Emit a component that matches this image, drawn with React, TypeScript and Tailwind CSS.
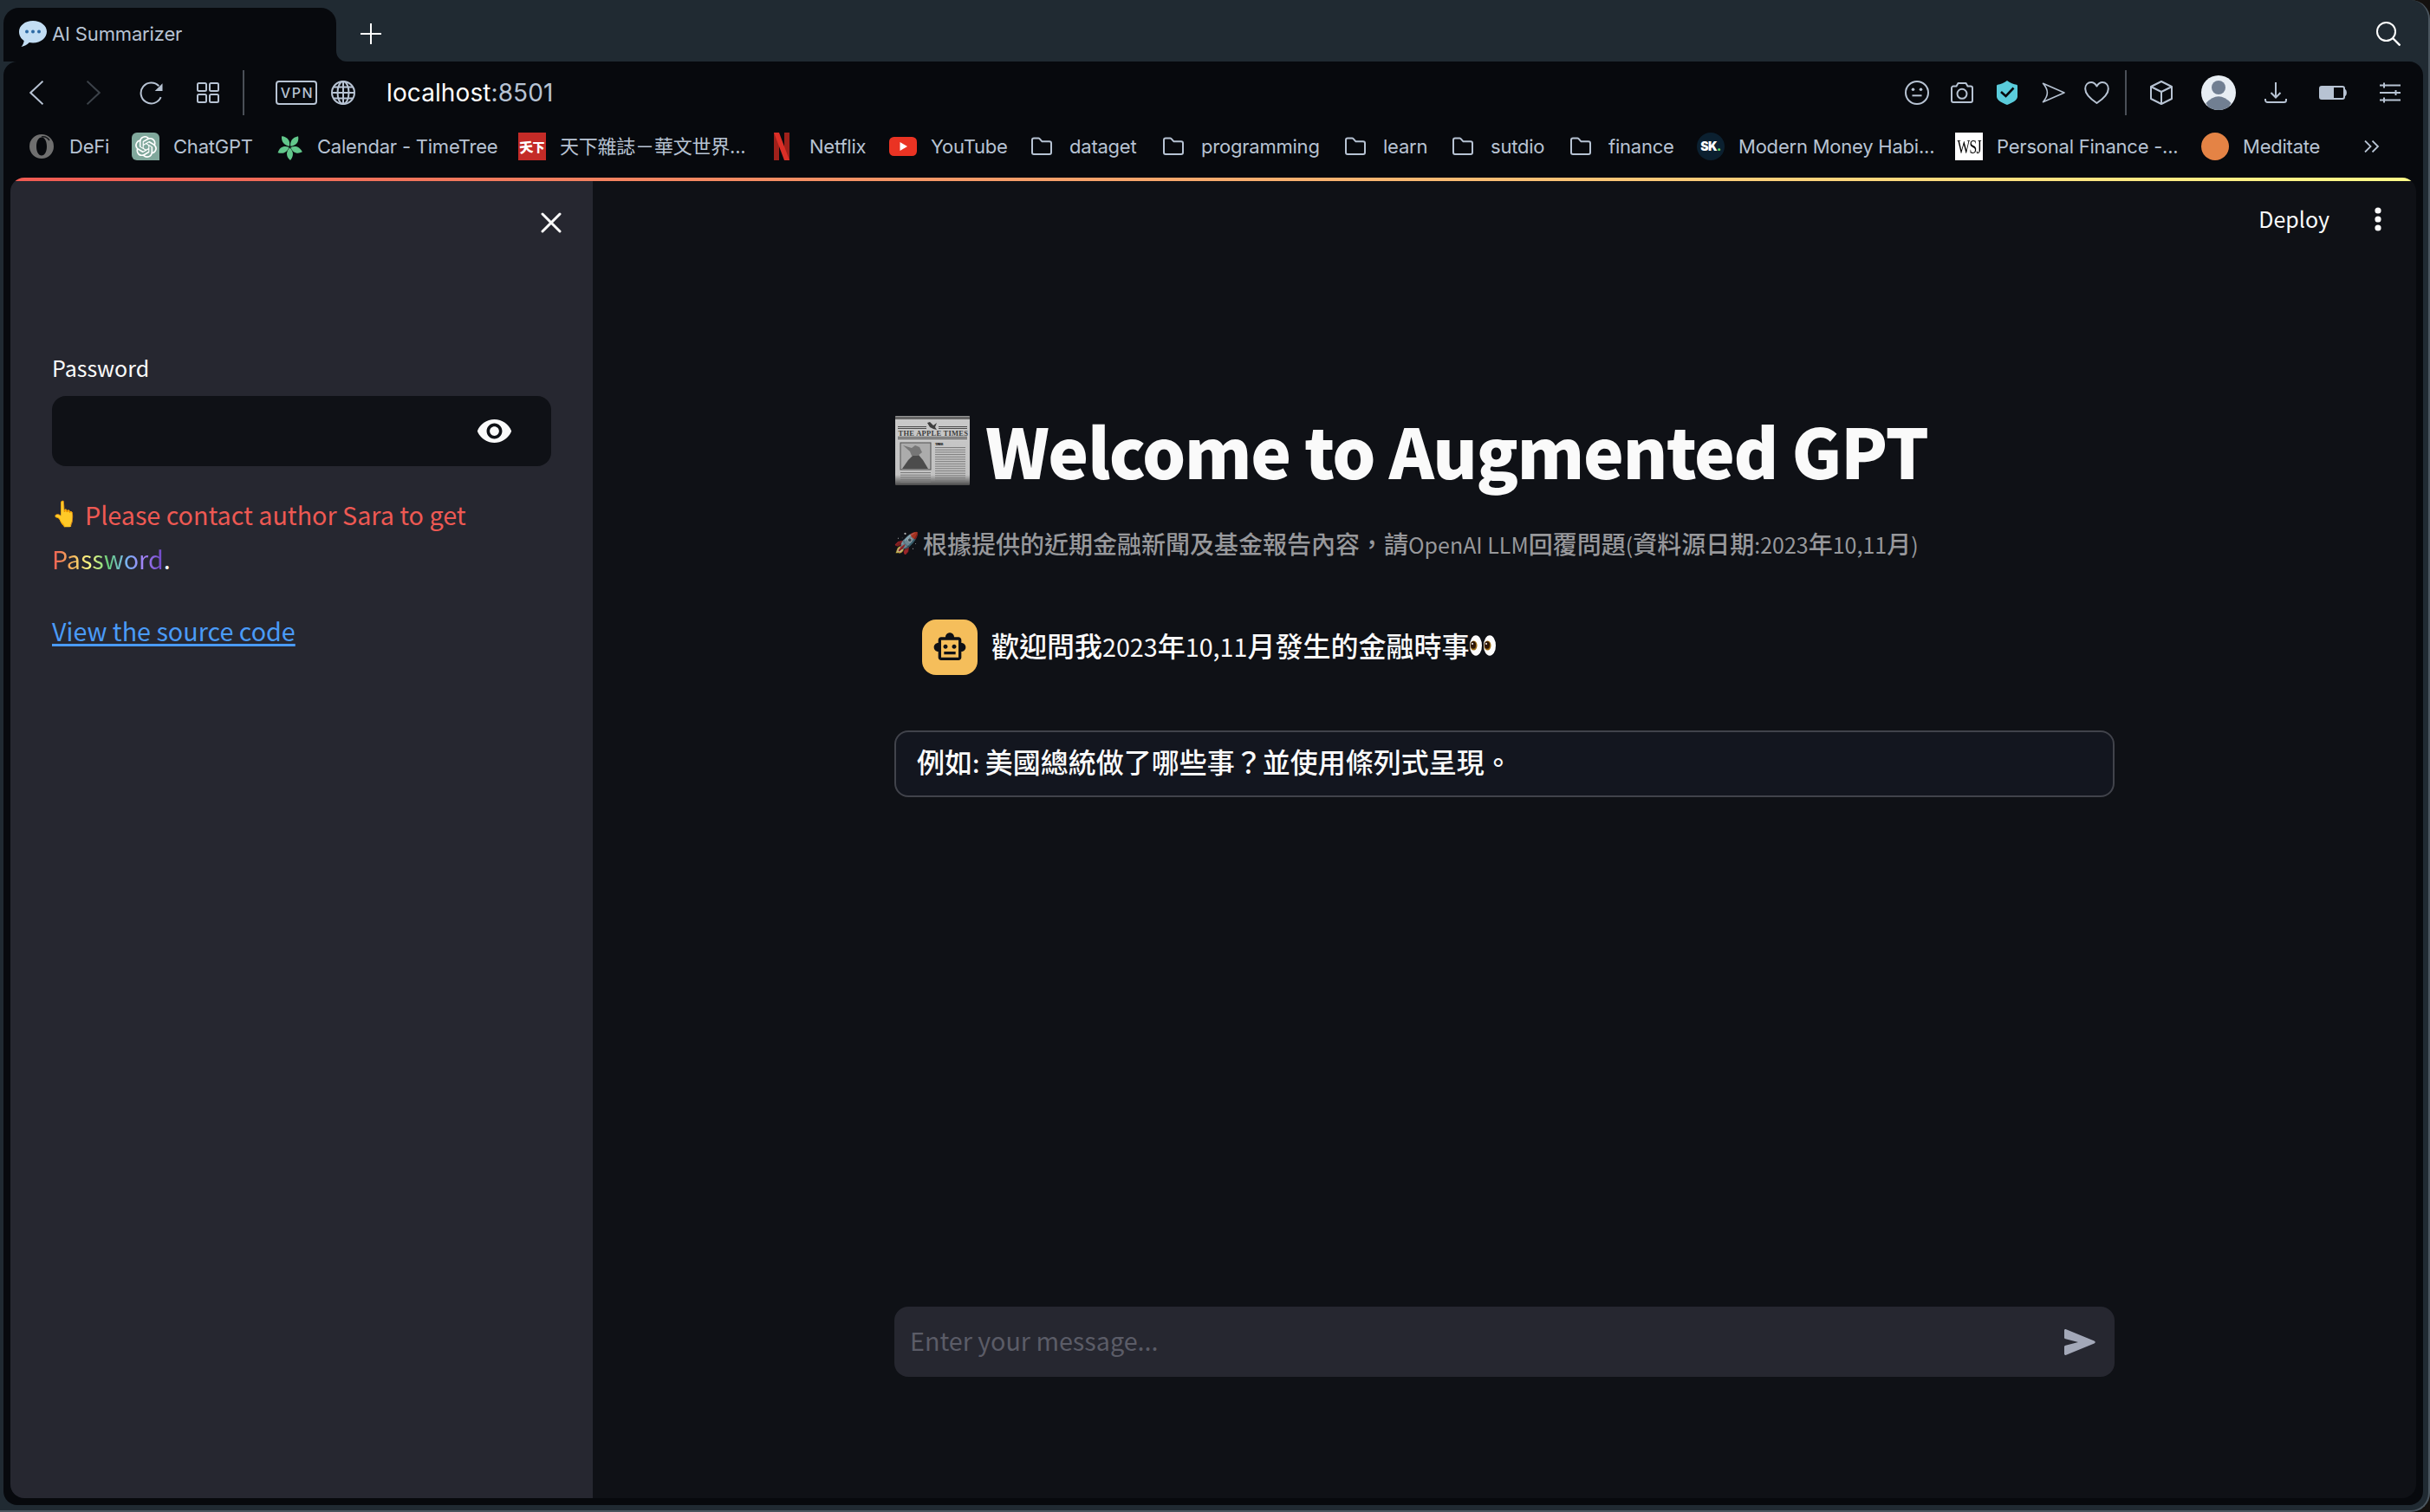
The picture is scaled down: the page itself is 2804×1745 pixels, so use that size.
import type { ReactNode } from 'react';
import { MdOutlineSmartToy, MdVisibility } from 'react-icons/md';
import { SiOpenai } from 'react-icons/si';

const Folder = () => (
  <svg viewBox="0 0 32 32" className="size-8" fill="none" stroke="#b7c3d3" strokeWidth="2" strokeLinejoin="round">
    <path d="M5 8.500a2 2 0 0 1 2-2h5.200a2 2 0 0 1 1.400.6l2.900 3.200H25a2 2 0 0 1 2 2V23a2 2 0 0 1-2 2H7a2 2 0 0 1-2-2Z" />
  </svg>
);

const Ring = () => (
  <svg viewBox="0 0 32 32" className="size-8">
    <path fillRule="evenodd" fill="#6f6f6f" d="M16 2a14 14 0 1 0 0 28a14 14 0 1 0 0-28ZM16 5.500c3.600 0 6 4.500 6 10.500s-2.400 10.500-6 10.500s-6-4.500-6-10.500s2.400-10.500 6-10.500Z" />
    <path d="M16 5c4-1 7 1 9 4" stroke="#15171a" strokeWidth="1.500" fill="none" />
  </svg>
);

const OpenAi = () => (
  <span className="flex size-8 items-center justify-center rounded-tl-md rounded-tr-md rounded-bl-md bg-[#80a89c]">
    <SiOpenai className="size-[25px] text-white" />
  </span>
);

const PETALS = [-36, 40, 114, 180, -114];
const TimeTree = () => (
  <svg viewBox="0 0 32 32" className="size-8">
    <g transform="translate(16.500 16.500)" fill="#62c78b">
      {PETALS.map((a) => (
        <path key={a} transform={`rotate(${a})`} d="M0 -1C-4 -5 -5 -10 -0.500 -15.500C5 -11 4.500 -5 0 -1Z" />
      ))}
    </g>
  </svg>
);

const TianXia = () => (
  <span className="flex size-8 items-center justify-center bg-[#c42b27] font-['Noto_Sans_CJK_TC',sans-serif] leading-none font-black text-white">
    <span className="-mr-px inline-block -rotate-6 text-[16px]">天</span>
    <span className="inline-block text-[14px]">下</span>
  </span>
);

const Netflix = () => (
  <svg viewBox="0 0 32 32" className="size-8">
    <path d="M7 0h6v32H7zM19 0h6v32h-6z" fill="#a0211b" />
    <path d="M7 0h6l12 32h-6z" fill="#dc2f27" />
  </svg>
);

const YouTube = () => (
  <svg viewBox="0 0 32 32" className="size-8">
    <rect x="0" y="5" width="32" height="22" rx="5.500" fill="#ea3323" />
    <path d="M12.500 11v10l8.500-5z" fill="#fff" />
  </svg>
);

const Sk = () => (
  <span className="flex size-8 items-center justify-center rounded-full bg-[#0b2030] font-['Inter',sans-serif] text-[14px] leading-none font-black tracking-[-0.5px] text-white">
    SK<span className="text-[#5ee06a]">.</span>
  </span>
);

const Wsj = () => (
  <span className="flex size-8 items-center justify-center bg-white">
    <span className="inline-block scale-x-[0.68] font-['Liberation_Serif',serif] text-[23px] leading-none tracking-[-1px] text-black">WSJ</span>
  </span>
);

const Orange = () => <span className="block size-8 rounded-full bg-[#e48345]" />;

function Bookmark({ icon, label, width }: { icon: ReactNode; label: string; width: string }) {
  return (
    <div className={`flex shrink-0 items-center gap-4 whitespace-nowrap ${width}`}>
      <span className="size-8 shrink-0">{icon}</span>
      <span className="text-[22px] leading-8 tracking-[-0.22px]">{label}</span>
    </div>
  );
}

function TabStrip() {
  return (
    <div className="flex h-[71px] shrink-0 items-end justify-between">
      <div className="flex items-end">
        <div className="flex h-[62px] w-[384px] items-center rounded-t-[18px] bg-[#07090d] pb-0.5 pl-[18px]">
          <svg viewBox="0 0 32 30" className="h-[30px] w-8">
            <path d="M16 0C25 0 32 5.500 32 12.500S25 25.500 16 25.500c-1.500 0-3-.2-4.200-.5C9.500 27.500 6 29.500 2.500 30c1.800-2 3-4.500 3.200-7C2.200 20.800 0 17 0 12.500 0 5.500 7 0 16 0Z" fill="#c3def4" />
            <g fill="#2e6ba5">
              <circle cx="9" cy="12.500" r="2" />
              <circle cx="16" cy="12.500" r="2" />
              <circle cx="23" cy="12.500" r="2" />
            </g>
          </svg>
          <span className="ml-1.5 text-[22px] leading-8 tracking-[-0.15px]">AI Summarizer</span>
        </div>
        <svg viewBox="0 0 12 12" className="size-3">
          <path d="M0 0V12H12A12 12 0 0 1 0 0Z" fill="#07090d" />
        </svg>
        <svg viewBox="0 0 24 24" className="mb-5 ml-4 size-6" stroke="#fff" strokeWidth="2">
          <path d="M12 0V24M0 12H24" />
        </svg>
      </div>
      <svg viewBox="0 0 28 28" className="mr-[26px] mb-[18px] size-7" fill="none" stroke="#fff" strokeWidth="2">
        <circle cx="11.500" cy="11.500" r="10.500" />
        <path d="M19 19L27.500 27.500" strokeWidth="2.400" />
      </svg>
    </div>
  );
}

function Toolbar() {
  return (
    <div className="flex h-[72px] shrink-0 items-center justify-between pr-[26px] pl-[30px]">
      <div className="flex items-center">
        <svg viewBox="0 0 16 28" className="h-7 w-4" fill="none" stroke="#b7c3d3" strokeWidth="2">
          <path d="M15.500 .7L1.300 14L15.500 27.300" />
        </svg>
        <svg viewBox="0 0 16 28" className="ml-[50px] h-7 w-4" fill="none" stroke="#3c4249" strokeWidth="2">
          <path d="M.5 .7L14.700 14L.5 27.300" />
        </svg>
        <svg viewBox="0 0 27 27" className="ml-[45px] size-[27px]" fill="none" stroke="#b7c3d3" strokeWidth="2">
          <path d="M24.600 18.200A12 12 0 1 1 22.300 5.200" />
          <path d="M26.500 2.200V11H17.700Z" fill="#b7c3d3" stroke="none" />
        </svg>
        <svg viewBox="0 0 26 24" className="ml-[39px] h-6 w-[26px]" fill="none" stroke="#b7c3d3" strokeWidth="2">
          <rect x="1" y="1" width="10" height="9" rx="1.500" />
          <rect x="15" y="1" width="10" height="9" rx="1.500" />
          <rect x="1" y="14" width="10" height="9" rx="1.500" />
          <rect x="15" y="14" width="10" height="9" rx="1.500" />
        </svg>
        <div className="ml-[27px] h-[52px] w-0.5 bg-[#4a4f57]" />
        <div className="ml-[36px] flex h-7 w-12 items-center justify-center rounded-[4px] border-2 border-[#b7c3d3] pl-0.5 text-[16px] leading-none font-medium tracking-[1.6px]">
          VPN
        </div>
        <svg viewBox="0 0 28 28" className="ml-4 size-7" fill="none" stroke="#b7c3d3" strokeWidth="2">
          <circle cx="14" cy="14" r="13" />
          <ellipse cx="14" cy="14" rx="6.500" ry="13" />
          <path d="M14 1V27M1.500 14H26.500M3 7.500H25M3 20.500H25" />
        </svg>
        <div className="ml-[36px] text-[28px] leading-9 tracking-[0.1px] text-white">
          localhost<span className="text-[#b7c3d3]">:8501</span>
        </div>
      </div>
      <div className="flex items-center">
        <svg viewBox="0 0 28 28" className="size-7" fill="none" stroke="#b7c3d3" strokeWidth="2">
          <circle cx="14" cy="14" r="13" />
          <path d="M8.500 17.300H19.500" />
          <circle cx="9.500" cy="10.200" r="1.800" fill="#b7c3d3" stroke="none" />
          <circle cx="18.500" cy="10.200" r="1.800" fill="#b7c3d3" stroke="none" />
        </svg>
        <svg viewBox="0 0 26 24" className="ml-[25px] h-6 w-[26px]" fill="none" stroke="#b7c3d3" strokeWidth="2" strokeLinejoin="round">
          <path d="M3 4.500H6.500L8.500 1H17.500L19.500 4.500H23a2 2 0 0 1 2 2V21a2 2 0 0 1-2 2H3a2 2 0 0 1-2-2V6.500a2 2 0 0 1 2-2Z" />
          <circle cx="13" cy="13.300" r="5.500" />
        </svg>
        <svg viewBox="0 0 24 28" className="ml-[27px] h-7 w-6">
          <path d="M12 0C15 2.500 20 4.500 23 4.800Q24 5 24 6V18.500C24 23 17 26 12 28C7 26 0 23 0 18.500V6Q0 5 1 4.800C4 4.500 9 2.500 12 0Z" fill="#5accdb" />
          <path d="M5 13L10.500 18L19.500 8.500" fill="none" stroke="#07090d" strokeWidth="2.600" />
        </svg>
        <svg viewBox="0 0 27 24" className="ml-[28px] h-6 w-[27px]" fill="none" stroke="#b7c3d3" strokeWidth="1.600" strokeLinejoin="round">
          <path d="M1.500 1.300L26 12L1.500 22.700C8 15 8 9 1.500 1.300Z" />
        </svg>
        <svg viewBox="0 0 29 26" className="ml-[22px] h-[26px] w-[29px]" fill="none" stroke="#b7c3d3" strokeWidth="2" strokeLinejoin="round">
          <path d="M14.500 5.500C12.500 2 10.500 1 8 1C4 1 1.200 4 1.200 8.500C1.200 14.500 7 20 14.500 25C22 20 27.800 14.500 27.800 8.500C27.800 4 25 1 21 1C18.500 1 16.500 2 14.500 5.500Z" />
        </svg>
        <div className="ml-[18px] h-[52px] w-0.5 bg-[#4a4f57]" />
        <svg viewBox="0 0 26 28" className="ml-[27px] h-7 w-[26px]" fill="none" stroke="#b7c3d3" strokeWidth="2" strokeLinejoin="round">
          <path d="M13 1L25 7V21L13 27L1 21V7ZM1 7L13 13L25 7M13 13V27" />
        </svg>
        <svg viewBox="0 0 40 40" className="ml-[33px] size-10 rounded-full">
          <rect width="40" height="40" fill="#e8eef4" />
          <circle cx="20" cy="14" r="8" fill="#717f92" />
          <path d="M5.500 32Q20 16.500 34.500 32L30 40H10Z" fill="#717f92" />
        </svg>
        <svg viewBox="0 0 26 24" className="ml-[33px] h-6 w-[26px]" fill="none" stroke="#b7c3d3" strokeWidth="2">
          <path d="M13 0V17M7.500 12L13 17.500L18.500 12M1 19V20.500A2.500 2.500 0 0 0 3.500 23H22.500A2.500 2.500 0 0 0 25 20.500V19" />
        </svg>
        <svg viewBox="0 0 32 16" className="ml-[37px] h-4 w-8">
          <rect x="1" y="1" width="28" height="14" rx="2" fill="none" stroke="#b7c3d3" strokeWidth="2" />
          <path d="M1 1H17V15H1ZM30 4C32.500 5 32.500 11 30 12Z" fill="#b7c3d3" />
        </svg>
        <svg viewBox="0 0 24 24" className="ml-[38px] size-6" stroke="#b7c3d3" strokeWidth="2">
          <path d="M0 3.500H24M0 12H24M0 20.500H24M5 .5V6.500M18.500 9V15M5 17.500V23.500" />
        </svg>
      </div>
    </div>
  );
}

function Bookmarks() {
  return (
    <div className="mb-[10px] flex h-[52px] shrink-0 items-center pl-7">
      <Bookmark icon={<Ring />} label="DeFi" width="w-[120px]" />
      <Bookmark icon={<OpenAi />} label="ChatGPT" width="w-[166px]" />
      <Bookmark icon={<TimeTree />} label="Calendar - TimeTree" width="w-[280px]" />
      <Bookmark icon={<TianXia />} label="天下雜誌－華文世界..." width="w-[288px]" />
      <Bookmark icon={<Netflix />} label="Netflix" width="w-[140px]" />
      <Bookmark icon={<YouTube />} label="YouTube" width="w-[160px]" />
      <Bookmark icon={<Folder />} label="dataget" width="w-[152px]" />
      <Bookmark icon={<Folder />} label="programming" width="w-[210px]" />
      <Bookmark icon={<Folder />} label="learn" width="w-[124px]" />
      <Bookmark icon={<Folder />} label="sutdio" width="w-[136px]" />
      <Bookmark icon={<Folder />} label="finance" width="w-[150px]" />
      <Bookmark icon={<Sk />} label="Modern Money Habi..." width="w-[298px]" />
      <Bookmark icon={<Wsj />} label="Personal Finance -..." width="w-[284px]" />
      <Bookmark icon={<Orange />} label="Meditate" width="w-[188px]" />
      <svg viewBox="0 0 18 14" className="h-[14px] w-[18px]" fill="none" stroke="#b7c3d3" strokeWidth="1.800">
        <path d="M1 .5L7.500 7L1 13.500M9.500 .5L16 7L9.500 13.500" />
      </svg>
    </div>
  );
}

function Sidebar() {
  return (
    <aside className="w-[672px] shrink-0 bg-[#262730] pr-12 pl-12 text-[28.7px] leading-[51px]">
      <div className="-mr-3 flex h-24 items-center justify-end">
        <svg viewBox="0 0 24 24" className="size-6" stroke="#fafafa" strokeWidth="3" strokeLinecap="round">
          <path d="M2 2L22 22M22 2L2 22" />
        </svg>
      </div>
      <div className="mt-[102px] h-[34px] text-[25px] leading-[35px]">Password</div>
      <div className="mt-4 flex h-[81px] items-center justify-end rounded-2xl bg-[#0f1116] pr-[44px]">
        <MdVisibility className="size-[43px] text-[#fafafa]" />
      </div>
      <p className="mt-[30px] text-[#ee5953]">
        <span className="inline-flex w-[38px] align-top">
          <span className="-ml-[3px] inline-block scale-x-[0.82] font-['Noto_Color_Emoji'] text-[29px]">👆</span>
        </span>
        Please contact author Sara to get
        <br />
        <span className="bg-[linear-gradient(90deg,#ee5953,#f6b65c_18%,#fdfd86_34%,#67cd7a_50%,#7ab0f8_68%,#a380f5_82%,#6b44c2)] bg-clip-text text-transparent">
          Password
        </span>
        <span className="text-[#fafafa]">.</span>
      </p>
      <p className="mt-8 text-[#4a9bf8]">
        <span className="underline decoration-[3px] underline-offset-[3px] [text-decoration-skip-ink:none]">View the source code</span>
      </p>
    </aside>
  );
}

const ROWS = Array.from({ length: 15 }, (_, i) => i);
const Newspaper = () => (
  <svg viewBox="0 0 86 80" className="h-20 w-[86px]">
    <defs>
      <linearGradient id="paper" x1="0" y1="0" x2="0" y2="1">
        <stop offset="0" stopColor="#c9c9c9" />
        <stop offset="0.850" stopColor="#c2c2c2" />
        <stop offset="1" stopColor="#4a4a4a" />
      </linearGradient>
    </defs>
    <rect width="86" height="80" rx="1" fill="url(#paper)" />
    <rect width="86" height="3.500" y="0.500" fill="#666" />
    <path d="M3 12.500H36M50 12.500H83M3 14.500H36M50 14.500H83M3 24.500H83M3 26.500H83" stroke="#4b4b4b" strokeWidth="1" />
    <path d="M37 8l3-1 4 4 4-3-2 5 2 3-4-1-4-2z" fill="#3e3e3e" />
    <text x="43" y="22.500" textAnchor="middle" fontFamily="Liberation Serif, serif" fontWeight="700" fontSize="8.500" textLength="79" fill="#3c3c3c">THE APPLE TIMES</text>
    <rect x="6" y="31" width="35" height="31" fill="#acacac" stroke="#505050" />
    <path d="M8 61L15 51L20 46L27 45L32 51L38 61Z" fill="#4c4c4c" />
    <path d="M9 34L19 37L23 34L28 36L31 42L26 46H19L17 41Z" fill="#777" />
    <text x="46" y="34" fontFamily="Liberation Sans, sans-serif" fontWeight="700" fontSize="3.800" fill="#333">TOP NEWS</text>
    {ROWS.map((i) => (
      <path key={i} d={`M46 ${36.5 + i * 2.7}H81`} stroke="#7b7b7b" strokeWidth="1" />
    ))}
    {ROWS.slice(0, 5).map((i) => (
      <path key={i} d={`M6 ${65.5 + i * 2.7}H41`} stroke="#7b7b7b" strokeWidth="1" />
    ))}
  </svg>
);

const Eyes = () => (
  <svg viewBox="0 0 32 26" className="h-[26px] w-8">
    <ellipse cx="8" cy="13" rx="7" ry="11.800" fill="#fdfdfd" />
    <ellipse cx="24" cy="13" rx="7" ry="11.800" fill="#fdfdfd" />
    <ellipse cx="5.500" cy="13" rx="4" ry="5.500" fill="#9a6a12" />
    <ellipse cx="21.500" cy="13" rx="4" ry="5.500" fill="#9a6a12" />
    <ellipse cx="5" cy="12.500" rx="3" ry="4.200" fill="#2c1608" />
    <ellipse cx="21" cy="12.500" rx="3" ry="4.200" fill="#2c1608" />
    <circle cx="4" cy="11" r="1" fill="#fff" />
    <circle cx="20" cy="11" r="1" fill="#fff" />
  </svg>
);

function Main() {
  return (
    <main className="flex min-w-0 flex-1 flex-col">
      <header className="flex h-[86px] shrink-0 items-center justify-end pr-10 text-[25px] leading-[36px]">
        Deploy
        <svg viewBox="0 0 8 28" className="mt-0.5 ml-[52px] h-7 w-2" fill="#fafafa">
          <circle cx="4" cy="4" r="3.600" />
          <circle cx="4" cy="14" r="3.600" />
          <circle cx="4" cy="24" r="3.600" />
        </svg>
      </header>
      <div className="mt-[171px] ml-[348px] flex w-[1408px] flex-1 flex-col whitespace-nowrap">
        <h1 className="flex h-[106px] items-center gap-[18px] text-[79px] leading-[106px] font-black tracking-[-1.5px]">
          <span className="ml-px pt-0.5">
            <Newspaper />
          </span>
          <span>Welcome to Augmented GPT</span>
        </h1>
        <div className="mt-[33px] flex h-11 text-[28px] leading-[44px] font-medium text-[#97989b]">
          <span className="-ml-px w-[34px] font-['Noto_Color_Emoji'] text-[24px] opacity-75">🚀</span>
          <span>
            根據提供的近期金融新聞及基金報告內容，請<span className="text-[25px] font-normal">OpenAI LLM</span>回覆問題
            <span className="text-[25px] font-normal">(</span>資料源日期<span className="text-[25px] font-normal">:2023</span>年
            <span className="text-[25px] font-normal">10,11</span>月<span className="text-[25px] font-normal">)</span>
          </span>
        </div>
        <div className="mt-[66px] flex h-16 items-center pl-8">
          <span className="flex size-16 items-center justify-center rounded-2xl bg-[#f5be5b]">
            <MdOutlineSmartToy className="size-10 text-[#0f1116]" />
          </span>
          <div className="ml-4 flex items-center pb-1 text-[32px] leading-[48px] font-medium">
            <span>
              歡迎問我<span className="text-[28.7px] font-normal">2023</span>年<span className="text-[28.7px] font-normal">10,11</span>月發生的金融時事
            </span>
            <Eyes />
          </div>
        </div>
        <div className="mt-16 flex h-[77px] items-center rounded-2xl border-2 border-[#41434b] bg-[#13161f] pb-[5px] pl-6 text-[32px] leading-[48px] font-medium">
          <span>
            例如<span className="text-[28.3px]">: </span>美國總統做了哪些事？並使用條列式呈現。
          </span>
        </div>
        <div className="mt-auto mb-[140px] flex h-[81px] items-center justify-between rounded-2xl bg-[#262730] pr-[22px] pl-[18px] text-[28.7px] leading-[44px]">
          <span className="pb-1 text-[#5b5c67]">Enter your message...</span>
          <svg viewBox="0 0 36 30" className="h-[30px] w-9" fill="#a3a8b8">
            <path d="M0 1.500C0 .3 1 -.3 2.200 .3L34.500 13.400C36.200 14.200 36.200 15.800 34.500 16.600L2.200 29.700C1 30.300 0 29.700 0 28.500V20.500C0 19.500 .6 18.900 1.500 18.700L16 15L1.500 11.300C.6 11.100 0 10.500 0 9.500Z" />
          </svg>
        </div>
      </div>
    </main>
  );
}

export default function App() {
  return (
    <div className="h-[1745px] w-[2804px] overflow-hidden bg-[#14110f]">
      <div className="flex h-full w-full flex-col rounded-r-[22px] border-r-2 border-b-2 border-[#4a555e] bg-[#202a32] pr-1.5 pb-1.5 pl-1 font-['Inter','Noto_Sans_CJK_TC',sans-serif] text-[#b7c3d3]">
        <TabStrip />
        <div className="flex min-h-0 flex-1 flex-col rounded-[16px] bg-[#07090d]">
          <Toolbar />
          <Bookmarks />
          <div className="mx-2 mb-2 flex min-h-0 flex-1 flex-col overflow-hidden rounded-[16px] bg-[#0f1116] font-['Noto_Sans_CJK_TC',sans-serif] text-[#fafafa]">
            <div className="h-1 shrink-0 bg-[linear-gradient(90deg,#f05a52,#fffb88)]" />
            <div className="flex min-h-0 flex-1">
              <Sidebar />
              <Main />
            </div>
          </div>
        </div>
      </div>
    </div>
  );
}
